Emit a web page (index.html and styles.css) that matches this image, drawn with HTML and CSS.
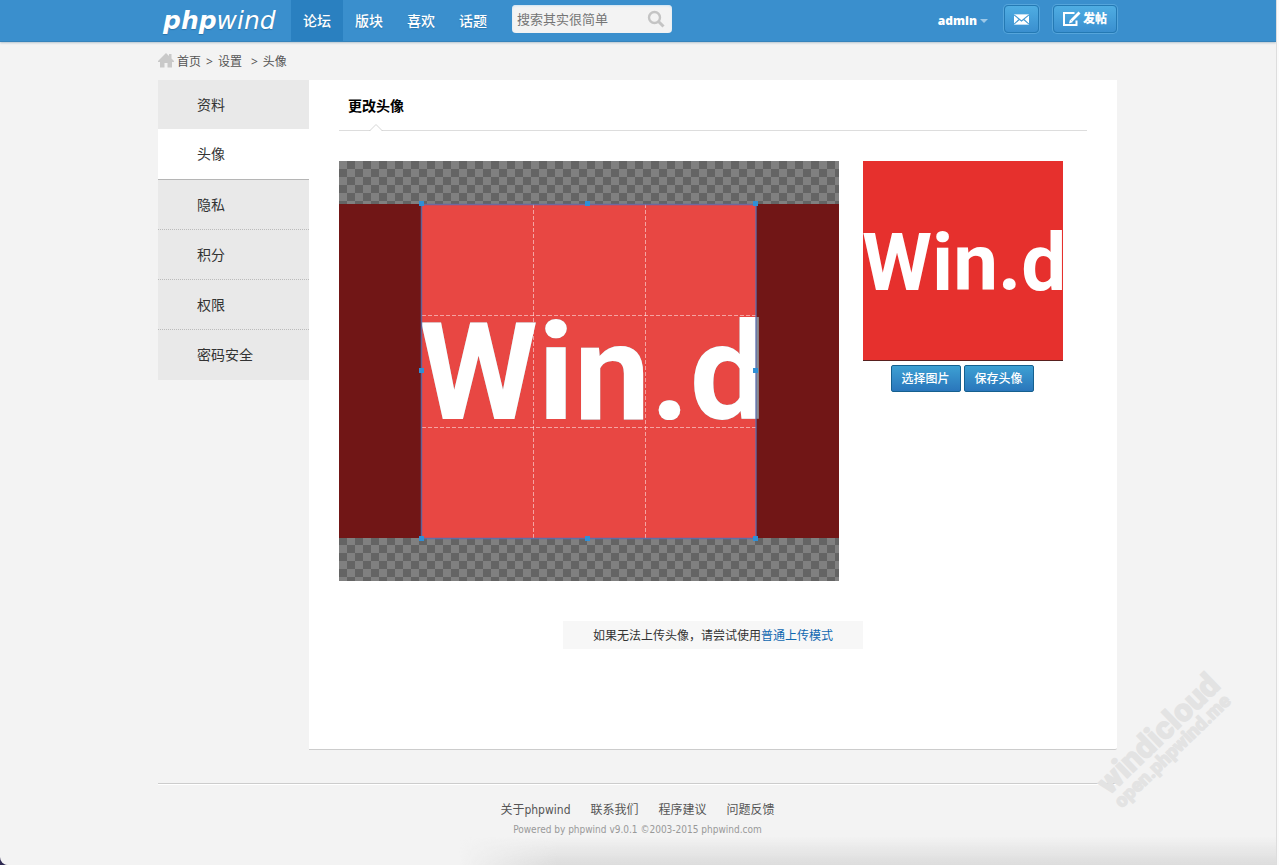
FILE: index.html
```html
<!DOCTYPE html>
<html lang="zh-CN">
<head>
<meta charset="utf-8">
<title>更改头像 - phpwind</title>
<link rel="stylesheet" href="styles.css">
</head>
<body>
<div class="page">
  <header class="topbar">
    <div class="wrap topbar-inner">
      <a class="logo" href="#"><b>php</b>wind</a>
      <nav class="nav">
        <a class="nav-item current" href="#">论坛</a>
        <a class="nav-item" href="#">版块</a>
        <a class="nav-item" href="#">喜欢</a>
        <a class="nav-item" href="#">话题</a>
      </nav>
      <form class="search">
        <input class="search-input" type="text" placeholder="搜索其实很简单" aria-label="搜索">
        <button class="search-btn" type="button" aria-label="搜索">
          <svg width="18" height="18" viewBox="0 0 18 18" fill="none" stroke="#c4c4c4"><circle cx="7.5" cy="7.5" r="5.5" stroke-width="2.4"/><path d="M11.5 11.5 16.5 16.5" stroke-width="3"/></svg>
        </button>
      </form>
      <div class="account">
        <a class="user" href="#">admin<span class="caret"></span></a>
        <button class="top-btn mail" type="button" aria-label="消息">
          <svg width="16" height="11" viewBox="0 0 16 11"><path fill="#fff" d="M0 0h16v11H0z"/><path d="M0 .5 8 7 16 .5M0 10.500 5.500 5.500M16 10.500 10.500 5.500" fill="none" stroke="#4199d3" stroke-width="1.2"/></svg>
        </button>
        <button class="top-btn post" type="button">
          <svg width="18" height="16" viewBox="0 0 18 16" fill="none" stroke="#fff"><path d="M11.500 2H1v12H13.500V9.500" stroke-width="2"/><path d="M16.500 1.500 8.500 9.500" stroke-width="2.800"/><path d="M6 12.500 7 8.500 10 11z" fill="#fff" stroke="none"/></svg>
          发帖
        </button>
      </div>
    </div>
  </header>

  <div class="wrap crumbs">
    <svg class="home" width="16" height="15" viewBox="0 0 16 15"><path fill="#c9c9c9" d="M8 0 11 3V1h2.500v4.500L16 8v1h-2v5.500H9.500V10h-3v4.500H2V9H0V8z"/></svg>
    <a href="#">首页</a><span class="sep">&gt;</span><a href="#">设置</a><span class="sep wide">&gt;</span><span>头像</span>
  </div>

  <div class="wrap columns">
    <nav class="side">
      <a class="side-item first" href="#">资料</a>
      <a class="side-item current" href="#">头像</a>
      <a class="side-item" href="#">隐私</a>
      <a class="side-item" href="#">积分</a>
      <a class="side-item" href="#">权限</a>
      <a class="side-item last" href="#">密码安全</a>
    </nav>
    <main class="content">
      <h2 class="title">更改头像
        <svg class="notch" width="14" height="8" viewBox="0 0 14 8"><path fill="#fff" stroke="#d5d5d5" d="M0 7.500h1L7 1.500l6 6h1"/><path fill="#fff" d="M2 7h10v1H2z"/></svg>
      </h2>
      <div class="editor">
        <svg class="cropper" viewBox="0 0 500 420" role="img" aria-label="Win.d">
          <defs>
            <pattern id="checks" width="16" height="16" patternUnits="userSpaceOnUse"><path fill="#808080" d="M0 0h16v16H0z"/><path fill="#646464" d="M8 0h8v8H8zM0 8h8v8H0z"/></pattern>
            <clipPath id="crop"><path d="M83 43h334v334H83z"/></clipPath>
          </defs>
          <path fill="url(#checks)" d="M0 0h500v420H0z"/>
          <path fill="#711616" d="M0 43h500v334H0z"/>
          <path fill="#e84743" d="M83 43h334v334H83z"/>
          <text class="mark dim" x="80" y="258">Win.d</text>
          <text class="mark" x="80" y="258" clip-path="url(#crop)">Win.d</text>
          <path d="M194.500 43v334M306.500 43v334M83 154.500h334M83 266.500h334" stroke="#fff" stroke-opacity=".5" stroke-dasharray="4 2" fill="none"/>
          <path d="M82.500 43.500h334.500v334H82.500z" fill="none" stroke="#5a6fae" stroke-opacity=".85" stroke-width="1.500"/>
          <path fill="#2f8fd6" d="M80 40h5v5h-5zM246 40h5v5h-5zM414 40h5v5h-5zM80 207h5v5h-5zM414 207h5v5h-5zM80 375h5v5h-5zM246 375h5v5h-5zM414 375h5v5h-5z"/>
        </svg>
        <div class="preview">
          <svg class="avatar" viewBox="0 0 200 200" role="img" aria-label="Win.d"><path fill="#e6302d" d="M0 0h200v200H0z"/><text class="mark small" x="-1" y="129">Win.d</text><path fill="#58201f" d="M0 199h200v1H0z"/></svg>
          <div class="actions">
            <button class="btn" type="button">选择图片</button>
            <button class="btn" type="button">保存头像</button>
          </div>
        </div>
      </div>
      <p class="notice">如果无法上传头像，请尝试使用<a href="#">普通上传模式</a></p>
    </main>
  </div>

  <footer class="wrap footer">
    <div class="links"><a href="#">关于phpwind</a><a href="#">联系我们</a><a href="#">程序建议</a><a href="#">问题反馈</a></div>
    <p class="copy">Powered by phpwind v9.0.1 ©2003-2015 phpwind.com</p>
  </footer>
  <div class="shade"></div>
  <div class="watermark"><div class="wm-big">windicloud</div><div class="wm-small">open.phpwind.me</div></div>
</div>
</body>
</html>
```
FILE: styles.css
```css
* { box-sizing: border-box; }
html { background: #fbfbfb; }
body {
  margin: 0;
  padding-right: 3px;
  background: linear-gradient(to right, #2f2a52 50%, #fbfbfb 50%);
  font: 12px/18px "Noto Sans", "Noto Sans CJK SC", sans-serif;
  color: #333;
}
a { color: inherit; text-decoration: none; }
button { font: inherit; cursor: pointer; }
.page {
  position: relative;
  min-height: 100vh;
  overflow: hidden;
  background: #f3f3f3;
  border-bottom-left-radius: 8px;
  box-shadow: 1px 0 0 #ddd;
}
.wrap { max-width: 960px; margin: 0 auto; padding-right: 1px; }

.topbar { background: #3a8fcd; border-bottom: 1px solid #3583bb; box-shadow: 0 1px 2px #b5c3ce; }
.topbar-inner { display: flex; align-items: center; height: 41px; }
.logo {
  width: 133px;
  padding-left: 5px;
  color: #fff;
  font: italic 25px/36px "DejaVu Sans", sans-serif;
  text-shadow: 0 1px 1px #2a73aa;
}
.nav { display: flex; }
.nav-item {
  padding: 0 12px;
  color: #fff;
  font-size: 14px;
  font-weight: 500;
  line-height: 41px;
  text-shadow: 0 1px 1px #2c78b0;
}
.nav-item.current { background: #2a80c0; }
.search {
  display: flex;
  align-items: center;
  width: 160px;
  height: 28px;
  margin: 0 0 3px 13px;
  padding-right: 7px;
  background: #f3f3f3;
  border-radius: 4px;
  box-shadow: inset 0 1px 2px #cde3f2;
}
.search-input {
  flex: 1;
  min-width: 0;
  height: 28px;
  padding: 0 5px 2px;
  border: 0;
  background: none;
  font: 13px "Noto Sans CJK SC", sans-serif;
}
.search-input::placeholder { color: #757575; opacity: 1; }
.search-btn { display: flex; padding: 0; border: 0; background: none; }
.account { display: flex; align-items: center; height: 41px; margin-left: auto; }
.user {
  display: flex;
  align-items: center;
  margin-right: 16px;
  color: #fff;
  font: 800 12px/20px "Open Sans", sans-serif;
}
.caret { margin-left: 3px; border: 4px solid transparent; border-top-color: #9cc8e8; border-bottom: 0; }
.top-btn {
  display: flex;
  align-items: center;
  justify-content: center;
  gap: 2px;
  height: 28px;
  margin-bottom: 3px;
  padding: 0 9px;
  color: #fff;
  font-size: 12px;
  font-weight: 900;
  border: 1px solid #2479b3;
  border-radius: 4px;
  background: linear-gradient(#4fade2, #3a8fcf);
  box-shadow: 0 0 0 1px #55a5db;
}
.mail { width: 35px; margin-right: 14px; }

.crumbs { display: flex; align-items: center; height: 38px; padding-top: 2px; color: #555; }
.home { margin: 0 3px 3px 0; }
.sep { margin: 0 5px; }
.sep.wide { margin-left: 9px; }

.columns { display: flex; align-items: flex-start; }
.side { flex: 0 0 151px; }
.side-item {
  display: block;
  height: 50px;
  padding-left: 39px;
  background: #e9e9e9;
  border-bottom: 1px dotted #bbb;
  font-size: 14px;
  line-height: 50px;
}
.side-item.first { height: 49px; border: 0; }
.side-item.current { height: 51px; background: #fff; border-bottom: 1px solid #b5b5b5; }
.side-item.last { border: 0; }
.content {
  flex: 1;
  min-width: 0;
  min-height: 670px;
  padding: 0 30px 100px;
  background: #fff;
  border-bottom: 1px solid #ccc;
  border-radius: 0 0 2px 0;
}
.title {
  position: relative;
  margin: 0 0 30px;
  padding: 2px 9px 0;
  border-bottom: 1px solid #ddd;
  color: #000;
  font-size: 14px;
  line-height: 48px;
}
.notch { position: absolute; left: 30px; bottom: -1px; }
.editor { display: flex; gap: 24px; }
.cropper { flex: 0 1 500px; min-width: 0; height: 420px; }
.mark { fill: #fff; font: 700 136px Roboto, sans-serif; }
.mark.dim { fill: #8a8c94; }
.mark.small { font-size: 80px; }
.preview { flex: 0 0 200px; }
.avatar { display: block; width: 200px; height: 200px; }
.actions { display: flex; justify-content: center; gap: 3px; margin: 4px 2px 0 0; }
.btn {
  width: 70px;
  height: 27px;
  padding: 0;
  border: 1px solid #15608f;
  border-radius: 2px;
  background: linear-gradient(#3da0d3, #2a76bb);
  color: #fff;
  font-weight: 500;
  white-space: nowrap;
}
.notice {
  width: 300px;
  margin: 40px auto 0;
  padding-top: 2px;
  background: #f7f7f7;
  line-height: 26px;
  text-align: center;
}
.notice a { color: #0f67b0; }

.footer {
  margin-top: 33px;
  padding-top: 17px;
  border-top: 1px solid #ccc;
  box-shadow: inset 0 1px 0 #fff;
  text-align: center;
  font-family: "DejaVu Sans Condensed", "Noto Sans CJK SC", sans-serif;
}
.links { display: flex; justify-content: center; gap: 20px; color: #555; }
.copy { margin: 3px 0 0; color: #999; font-size: 10px; line-height: 16px; }
.shade {
  position: absolute;
  left: 36%;
  right: 0;
  bottom: 0;
  height: 28px;
  background: linear-gradient(transparent, #dcdcdc);
  mask-image: linear-gradient(to right, transparent, #000 12%);
}
.watermark {
  position: absolute;
  right: 34px;
  bottom: 102px;
  color: #e3e3e3;
  font-family: Roboto, sans-serif;
  font-weight: 900;
  white-space: nowrap;
  transform: rotate(-44deg);
  -webkit-text-stroke: 1px #e3e3e3;
}
.wm-big { font-size: 32px; line-height: 28px; }
.wm-small { font-size: 19px; line-height: 18px; }
```
